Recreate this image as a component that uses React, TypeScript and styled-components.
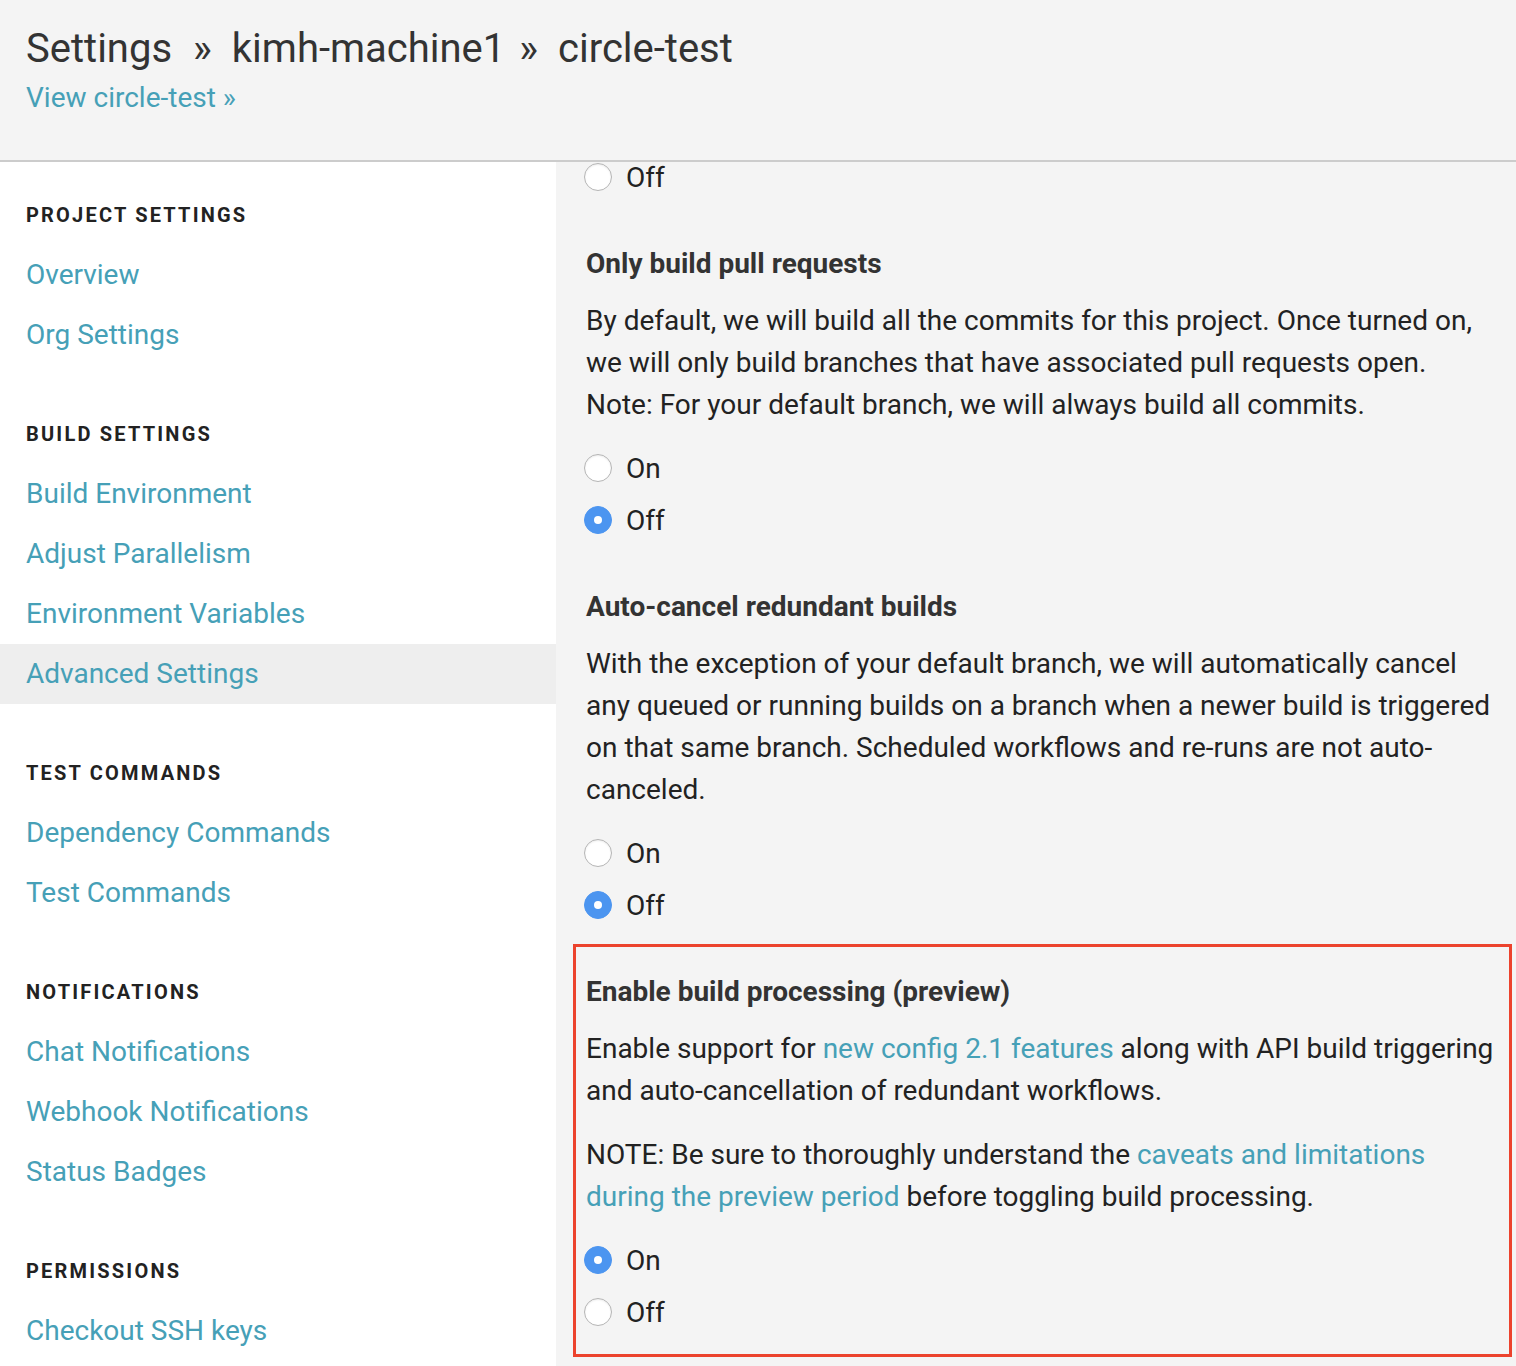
import styled, { createGlobalStyle } from "styled-components";

const GlobalStyle = createGlobalStyle`
  html, body {
    margin: 0;
    padding: 0;
    background: #f4f4f4;
    font-family: Roboto, "Liberation Sans", sans-serif;
    color: #333;
  }
  * { box-sizing: border-box; }
`;

const Header = styled.header`
  height: 162px;
  padding: 21px 26px 0;
  background: #f4f4f4;
  border-bottom: 2px solid #cccccc;
`;
const Title = styled.h1`
  margin: 0;
  font-size: 40px;
  font-weight: 400;
  line-height: 56px;
  color: #333;
`;
const Sep = styled.span<{ $left: number }>`
  margin: 0 20px 0 ${(p) => p.$left}px;
`;
const Link = styled.a`
  color: #46a0b7;
  text-decoration: none;
  cursor: pointer;
`;
const HeaderLink = styled(Link)`
  display: block;
  margin-top: 3px;
  font-size: 28px;
  line-height: 36px;
`;

const Body = styled.div`
  display: flex;
  height: 1204px;
  overflow: hidden;
`;

const Sidebar = styled.nav`
  width: 556px;
  flex-shrink: 0;
  background: #fff;
  padding-top: 24px;
`;
const NavSection = styled.div`
  margin-bottom: 40px;
`;
const NavHeading = styled.div`
  height: 59px;
  line-height: 59px;
  padding-left: 26px;
  font-size: 20px;
  font-weight: 700;
  letter-spacing: 2.2px;
  text-transform: uppercase;
  color: #222;
`;
const NavItem = styled(Link)<{ $active?: boolean }>`
  display: block;
  height: 60px;
  line-height: 60px;
  padding-left: 26px;
  font-size: 28px;
  background: ${(p) => (p.$active ? "#eeeeee" : "transparent")};
`;

const Content = styled.main`
  flex: 1;
  padding: 0 20px 0 30px;
  overflow: hidden;
`;
const Scroll = styled.div`
  margin-top: -11px;
`;
const Section = styled.section`
  & + & {
    margin-top: 40px;
  }
`;
const Highlight = styled.section`
  margin: 13px -16px 0 -13px;
  padding: 24px 10px 16px 10px;
  border: 3px solid #ec432d;
`;
const Heading = styled.h3`
  margin: 0 0 15px;
  font-size: 28px;
  font-weight: 700;
  line-height: 42px;
  color: #333;
`;
const Para = styled.p`
  margin: 0 0 22px;
  font-size: 28px;
  line-height: 42px;
  color: #222;
  &:last-of-type {
    margin-bottom: 0;
  }
`;
const Radios = styled.div`
  margin-top: 16px;
`;
const RadioRow = styled.label`
  display: flex;
  align-items: center;
  height: 52px;
  font-size: 28px;
  color: #222;
  cursor: pointer;
`;
const Dot = styled.span<{ $on?: boolean }>`
  width: 28px;
  height: 28px;
  margin-left: -2px;
  margin-right: 14px;
  border-radius: 50%;
  flex-shrink: 0;
  background: ${(p) => (p.$on ? "#4c95f0" : "#fff")};
  border: 1px solid ${(p) => (p.$on ? "#4c95f0" : "#b5b5b5")};
  box-shadow: ${(p) => (p.$on ? "none" : "inset 0 1px 2px rgba(0,0,0,0.08)")};
  display: flex;
  align-items: center;
  justify-content: center;
  &::after {
    content: "";
    display: ${(p) => (p.$on ? "block" : "none")};
    width: 8px;
    height: 8px;
    border-radius: 50%;
    background: #fff;
  }
`;

function Radio({ label, on }: { label: string; on?: boolean }) {
  return (
    <RadioRow>
      <Dot $on={on} />
      {label}
    </RadioRow>
  );
}

function OnOff({ on }: { on: boolean }) {
  return (
    <Radios>
      <Radio label="On" on={on} />
      <Radio label="Off" on={!on} />
    </Radios>
  );
}

const nav = [
  { title: "Project Settings", items: ["Overview", "Org Settings"] },
  {
    title: "Build Settings",
    items: [
      "Build Environment",
      "Adjust Parallelism",
      "Environment Variables",
      "Advanced Settings",
    ],
  },
  { title: "Test Commands", items: ["Dependency Commands", "Test Commands"] },
  {
    title: "Notifications",
    items: ["Chat Notifications", "Webhook Notifications", "Status Badges"],
  },
  { title: "Permissions", items: ["Checkout SSH keys"] },
];

export default function App() {
  return (
    <>
      <GlobalStyle />
      <Header>
        <Title>
          Settings<Sep $left={21}>»</Sep>kimh-machine1<Sep $left={14}>»</Sep>
          circle-test
        </Title>
        <HeaderLink>View circle-test »</HeaderLink>
      </Header>
      <Body>
        <Sidebar>
          {nav.map((s) => (
            <NavSection key={s.title}>
              <NavHeading>{s.title}</NavHeading>
              {s.items.map((i) => (
                <NavItem key={i} $active={i === "Advanced Settings"}>
                  {i}
                </NavItem>
              ))}
            </NavSection>
          ))}
        </Sidebar>
        <Content>
          <Scroll>
            <Section>
              <Radio label="Off" />
            </Section>
            <Section>
              <Heading>Only build pull requests</Heading>
              <Para>
                By default, we will build all the commits for this project.
                Once turned on, we will only build branches that have associated
                pull requests open. Note: For your default branch, we will
                always build all commits.
              </Para>
              <OnOff on={false} />
            </Section>
            <Section>
              <Heading>Auto-cancel redundant builds</Heading>
              <Para>
                With the exception of your default branch, we will automatically
                cancel any queued or running builds on a branch when a newer
                build is triggered on that same branch. Scheduled workflows and
                re-runs are not auto-canceled.
              </Para>
              <OnOff on={false} />
            </Section>
            <Highlight>
              <Heading>Enable build processing (preview)</Heading>
              <Para>
                Enable support for <Link>new config 2.1 features</Link> along
                with API build triggering and auto-cancellation of redundant
                workflows.
              </Para>
              <Para>
                NOTE: Be sure to thoroughly understand the{" "}
                <Link>caveats and limitations during the preview period</Link>{" "}
                before toggling build processing.
              </Para>
              <OnOff on={true} />
            </Highlight>
          </Scroll>
        </Content>
      </Body>
    </>
  );
}
